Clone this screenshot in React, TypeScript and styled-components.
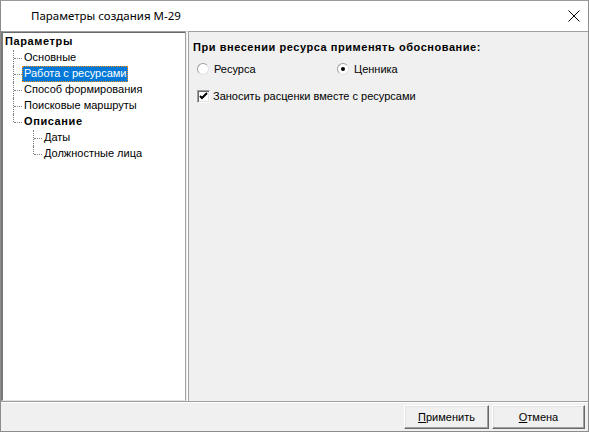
import React from 'react';
import styled, { createGlobalStyle } from 'styled-components';

const Global = createGlobalStyle`
  html, body { margin: 0; padding: 0; background: #ffffff; }
  body { font-family: "Liberation Sans", Arial, sans-serif; font-size: 11px; color: #000; }
`;

type Item = { label: string; bold?: boolean; selected?: boolean; children?: Item[] };

const tree: Item = {
  label: 'Параметры',
  bold: true,
  children: [
    { label: 'Основные' },
    { label: 'Работа с ресурсами', selected: true },
    { label: 'Способ формирования' },
    { label: 'Поисковые маршруты' },
    {
      label: 'Описание',
      bold: true,
      children: [{ label: 'Даты' }, { label: 'Должностные лица' }],
    },
  ],
};

const TreeBranch = ({ items }: { items: Item[] }) => (
  <Children>
    {items.map((it, i) => {
      const last = i === items.length - 1;
      return (
        <React.Fragment key={it.label}>
          <Row>
            <Elbow $last={last} />
            <Label $bold={it.bold} $selected={it.selected}>{it.label}</Label>
          </Row>
          {it.children && <Nested><TreeBranch items={it.children} /></Nested>}
        </React.Fragment>
      );
    })}
  </Children>
);

const App = () => {
  return (
    <>
      <Global />
      <Window>
        <TitleBar>
          <Title>Параметры создания М-29</Title>
          <Close>
            <svg width="12" height="12" viewBox="0 0 12 12">
              <path d="M0.5 0.5 L11.5 11.5 M11.5 0.5 L0.5 11.5" stroke="#000" strokeWidth="1" fill="none" />
            </svg>
          </Close>
        </TitleBar>
        <Client>
          <Main>
            <Tree>
              <Row>
                <Label $bold>{tree.label}</Label>
              </Row>
              <TreeBranch items={tree.children!} />
            </Tree>
            <Panel>
              <Heading>При внесении ресурса применять обоснование:</Heading>
              <RadioRow>
                <Option $width={136}>
                  <Radio />
                  <span>Ресурса</span>
                </Option>
                <Option>
                  <Radio $checked />
                  <span>Ценника</span>
                </Option>
              </RadioRow>
              <Option $gap={3}>
                <Check>
                  <svg width="9" height="9" viewBox="0 0 9 9">
                    <path d="M1 4 L3 6 L8 1" stroke="#000" strokeWidth="2" fill="none" />
                  </svg>
                </Check>
                <span>Заносить расценки вместе с ресурсами</span>
              </Option>
            </Panel>
          </Main>
          <Footer>
            <Button $width={85}><u>П</u>рименить</Button>
            <Button $width={93}><u>О</u>тмена</Button>
          </Footer>
        </Client>
      </Window>
    </>
  );
};

export default App;

const Window = styled.div`
  width: 589px;
  height: 432px;
  box-sizing: border-box;
  border: 1px solid #8c8c8c;
  border-top: 1px solid #9a9a9a;
  display: flex;
  flex-direction: column;
  background: #f0f0f0;
`;

const TitleBar = styled.div`
  height: 30px;
  background: #ffffff;
  display: flex;
  align-items: center;
  justify-content: space-between;
  padding-left: 30px;
`;

const Title = styled.div`
  font-family: "Noto Sans", "Open Sans", sans-serif;
  font-size: 11.5px;
  color: #000;
  margin-top: -1px;
`;

const Close = styled.div`
  width: 30px;
  height: 30px;
  display: flex;
  align-items: center;
  justify-content: center;
  margin-right: -1px;
`;

const Client = styled.div`
  flex: 1;
  display: flex;
  flex-direction: column;
`;

const Main = styled.div`
  flex: 1;
  display: flex;
  gap: 1px;
`;

const Tree = styled.div`
  width: 185px;
  box-sizing: border-box;
  background: #ffffff;
  border-style: solid;
  border-width: 1px 1px 1px 2px;
  border-color: #a0a0a0 #a0a0a0 #e3e3e3 #7a7a7a;
  box-shadow: inset 0 1px 0 #696969;
  padding: 2px 0 0 0;
`;

const Children = styled.div`
  margin-left: 10px;
`;

const Nested = styled.div`
  margin-left: 10px;
`;

const Row = styled.div`
  height: 16px;
  display: flex;
  align-items: center;
`;

const Elbow = styled.span<{ $last?: boolean }>`
  position: relative;
  width: 9px;
  height: 16px;
  flex: none;

  &::before {
    content: "";
    position: absolute;
    left: 0;
    top: 0;
    height: ${p => (p.$last ? '8px' : '16px')};
    border-left: 1px dotted #808080;
  }
  &::after {
    content: "";
    position: absolute;
    left: 1px;
    top: 8px;
    width: 8px;
    border-top: 1px dotted #808080;
  }
`;

const Label = styled.span<{ $bold?: boolean; $selected?: boolean }>`
  padding: 0 2px;
  height: 16px;
  line-height: 15px;
  box-sizing: border-box;
  font-weight: ${p => (p.$bold ? 'bold' : 'normal')};
  letter-spacing: ${p => (p.$bold ? '0.6px' : 'normal')};
  background: ${p => (p.$selected ? '#0078d7' : 'transparent')};
  color: ${p => (p.$selected ? '#ffffff' : '#000000')};
  outline: ${p => (p.$selected ? '1px dotted #ff8c00' : 'none')};
  outline-offset: -1px;
  white-space: nowrap;
`;

const Panel = styled.div`
  flex: 1;
  box-sizing: border-box;
  border-top: 1px solid #a0a0a0;
  border-left: 1px solid #ffffff;
  box-shadow: inset 1px 0 0 #a0a0a0;
  padding: 8px 0 0 5px;
  display: flex;
  flex-direction: column;
`;

const Heading = styled.div`
  font-weight: bold;
  letter-spacing: 0.55px;
  height: 14px;
  line-height: 14px;
  margin-bottom: 8px;
  white-space: nowrap;
`;

const RadioRow = styled.div`
  display: flex;
  margin-left: 4px;
  margin-bottom: 13px;
`;

const Option = styled.label<{ $width?: number; $gap?: number }>`
  display: flex;
  align-items: center;
  gap: ${p => p.$gap ?? 5}px;
  height: 14px;
  width: ${p => (p.$width ? `${p.$width}px` : 'auto')};
  padding-left: 4px;
`;

const Radio = styled.span<{ $checked?: boolean }>`
  width: 12px;
  height: 12px;
  box-sizing: border-box;
  border-radius: 50%;
  background: #ffffff;
  border: 1px solid;
  border-color: #a0a0a0 #e3e3e3 #e3e3e3 #a0a0a0;
  display: flex;
  align-items: center;
  justify-content: center;
  margin-left: -4px;

  &::after {
    content: "";
    width: 4px;
    height: 4px;
    border-radius: 50%;
    background: ${p => (p.$checked ? '#000' : 'transparent')};
  }
`;

const Check = styled.span`
  width: 13px;
  height: 13px;
  box-sizing: border-box;
  background: #ffffff;
  border: 1px solid;
  border-color: #a0a0a0 #ffffff #ffffff #a0a0a0;
  box-shadow: inset 1px 1px 0 #696969, inset -1px -1px 0 #e3e3e3;
  display: flex;
  align-items: center;
  justify-content: center;
`;

const Footer = styled.div`
  height: 30px;
  box-sizing: border-box;
  border-top: 1px solid #a0a0a0;
  box-shadow: inset 0 1px 0 #ffffff;
  display: flex;
  justify-content: flex-end;
  align-items: center;
  gap: 3px;
  padding: 0 3px 0 0;
`;

const Button = styled.div<{ $width: number }>`
  width: ${p => p.$width}px;
  height: 24px;
  box-sizing: border-box;
  background: #f0f0f0;
  border: 1px solid;
  border-color: #ffffff #696969 #696969 #ffffff;
  box-shadow: inset -1px -1px 0 #a0a0a0, inset 1px 1px 0 #e3e3e3;
  display: flex;
  align-items: center;
  justify-content: center;
  font-size: 11px;

  u { text-decoration: underline; }
`;
